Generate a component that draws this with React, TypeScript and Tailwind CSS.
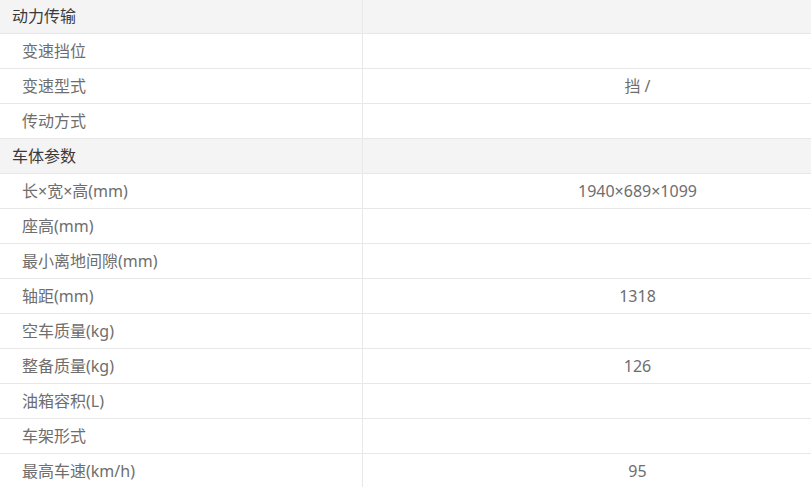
const sections = [
  {
    title: '动力传输',
    rows: [
      ['变速挡位', ''],
      ['变速型式', '挡 /'],
      ['传动方式', ''],
    ],
  },
  {
    title: '车体参数',
    rows: [
      ['长×宽×高(mm)', '1940×689×1099'],
      ['座高(mm)', ''],
      ['最小离地间隙(mm)', ''],
      ['轴距(mm)', '1318'],
      ['空车质量(kg)', ''],
      ['整备质量(kg)', '126'],
      ['油箱容积(L)', ''],
      ['车架形式', ''],
      ['最高车速(km/h)', '95'],
    ],
  },
];

export default function App() {
  return (
    <div className="w-[811px] h-[487px] overflow-hidden bg-white">
      <div
        className="-mt-px w-[912px] text-[16px] grid grid-cols-[363px_549px]"
        style={{ fontFamily: '"Noto Sans", "Noto Sans CJK SC", sans-serif' }}
      >
        {sections.map((section) => (
          <>
            <div key={section.title} className="h-[35px] flex items-center pl-3 bg-[#f4f4f4] text-[#3a3a3a] border-b border-r border-[#e8e8e8]">
              {section.title}
            </div>
            <div className="h-[35px] bg-[#f4f4f4] border-b border-[#e8e8e8]" />
            {section.rows.map(([label, value]) => (
              <>
                <div key={label} className="h-[35px] flex items-center pl-[22px] text-[#6e6e6e] border-b border-r border-[#e8e8e8]">
                  {label}
                </div>
                <div className="h-[35px] flex items-center justify-center text-[#6e6e6e] border-b border-[#e8e8e8]">
                  {value}
                </div>
              </>
            ))}
          </>
        ))}
      </div>
    </div>
  );
}
